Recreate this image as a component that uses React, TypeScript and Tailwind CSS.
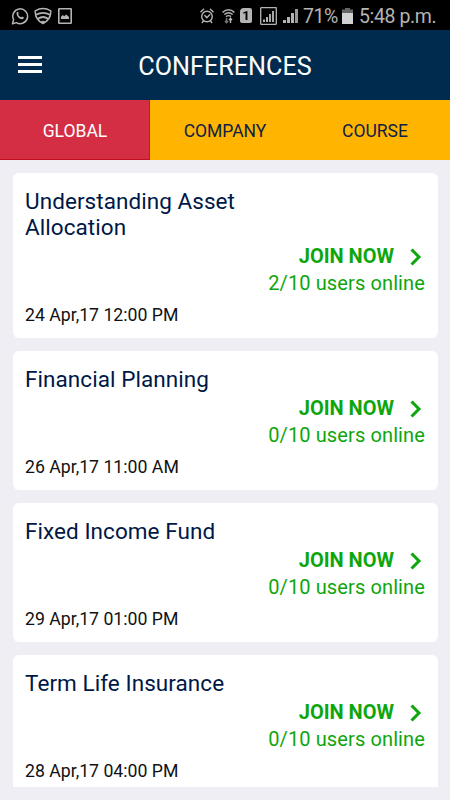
import { clsx } from 'clsx'

const TABS = ['GLOBAL', 'COMPANY', 'COURSE']

const CONFERENCES = [
  { title: 'Understanding Asset Allocation', online: 2, date: '24 Apr,17 12:00 PM' },
  { title: 'Financial Planning', online: 0, date: '26 Apr,17 11:00 AM' },
  { title: 'Fixed Income Fund', online: 0, date: '29 Apr,17 01:00 PM' },
  { title: 'Term Life Insurance', online: 0, date: '28 Apr,17 04:00 PM' },
]

function WhatsAppIcon() {
  return (
    <svg width="18" height="18" viewBox="0 0 18 18" fill="none" stroke="#b4b4b4">
      <path d="M1.5 16.7 2.6 12.6A7.4 7.4 0 1 1 5.4 15.6Z" strokeWidth="1.5" strokeLinejoin="round" />
      <path
        d="M5.8 5.2c.5-.7 1.2-.6 1.4 0l.5 1.2c.1.4-.5.8-.5 1.1.6 1.3 1.7 2.2 2.9 2.7.4 0 .8-.9 1.2-.8l1.4.8c.3.3 0 1.4-.9 1.8-3 1.1-7.3-3.5-6-6.8Z"
        fill="#b4b4b4"
        stroke="none"
      />
    </svg>
  )
}

function ShieldIcon() {
  return (
    <svg width="18" height="18" viewBox="0 0 18 18" fill="none" stroke="#b4b4b4">
      <path d="M1.2 3.8Q9-.6 16.8 3.8C17 10 14 14 9 16.5 4 14 1 10 1.2 3.8Z" strokeWidth="1.5" strokeLinejoin="round" />
      <path d="M2 7.8Q9 4 16 7.800M4 11.800Q9 8.200 14 11.800" strokeWidth="1.8" />
      <path d="M7 14.800Q9 13.300 11 14.800L9 16.500Z" fill="#b4b4b4" strokeWidth=".5" />
    </svg>
  )
}

function PictureIcon() {
  return (
    <svg width="14" height="16" viewBox="0 0 14 16" fill="none">
      <rect x=".8" y=".8" width="12.4" height="14.4" rx=".5" stroke="#b4b4b4" strokeWidth="1.6" />
      <path d="M3 11V8.800L4.800 7 6.300 8.200 8.200 6.500 11 9v2Z" fill="#b4b4b4" />
    </svg>
  )
}

function AlarmIcon() {
  return (
    <svg width="14" height="16" viewBox="0 0 14 16" fill="none" stroke="#b4b4b4" strokeWidth="1.4" strokeLinecap="round">
      <circle cx="7" cy="8.5" r="5.3" />
      <path d="M.9 3.7 3.6 1.2M13.1 3.7 10.4 1.2M4.8 7.5 6.8 9.7 9.7 6.7M3.5 12.8 2.3 14.5M10.5 12.8 11.7 14.5" />
    </svg>
  )
}

function WifiIcon() {
  return (
    <svg width="13" height="16" viewBox="0 0 13 16" fill="none" stroke="#b4b4b4" strokeWidth="1.4">
      <path d="M.6 4.4Q6.5-.8 12.4 4.4M2.3 6.5Q6.5 3 10.7 6.5M4 8.6Q6.5 6.6 9 8.6" />
      <path d="M4.5 10v4.5M3 13l1.5 1.7L6 13" stroke="#777" />
      <path d="M8.5 15v-4.5M7 12l1.5-1.7L10 12" />
    </svg>
  )
}

function SimIcon() {
  return (
    <span className="flex h-[15px] w-[12px] items-center justify-center rounded-[2px] rounded-tl-[4px] bg-[#b4b4b4] text-[13px] leading-none font-bold text-black">
      1
    </span>
  )
}

function SignalIcon({ boxed = false }: { boxed?: boolean }) {
  if (boxed) {
    return (
      <svg width="17" height="18" viewBox="0 0 17 18">
        <rect x=".7" y=".7" width="15.6" height="16.6" rx=".5" fill="none" stroke="#b4b4b4" strokeWidth="1.3" />
        <path d="M3 12.5h2V15H3ZM6 10h2v5H6Z" fill="#b4b4b4" />
        <path d="M9 7h2v8H9ZM12 4h2v11h-2Z" fill="#a6a6a6" />
      </svg>
    )
  }
  return (
    <svg width="16" height="15" viewBox="0 0 16 15">
      <path d="M0 12h3v3H0ZM4 9h3v6H4ZM8 5h3v10H8Z" fill="#b4b4b4" />
      <path d="M12 1h3v14h-3Z" fill="#999" />
    </svg>
  )
}

function BatteryIcon() {
  return (
    <svg width="11" height="16" viewBox="0 0 11 16">
      <path d="M3 0h5v1.5h3V5H0V1.5h3Z" fill="#666" />
      <path d="M0 5h11v11H0Z" fill="#d2d2d2" />
    </svg>
  )
}

function StatusBar() {
  return (
    <div className="flex h-[30px] items-center justify-between bg-black pt-px pr-[14px] pl-[11px] text-[#b4b4b4]">
      <div className="flex items-center">
        <WhatsAppIcon />
        <span className="ml-[5px] flex"><ShieldIcon /></span>
        <span className="ml-[6px] flex"><PictureIcon /></span>
      </div>
      <div className="flex items-center">
        <AlarmIcon />
        <span className="ml-[8px] flex"><WifiIcon /></span>
        <span className="ml-[5px] flex"><SimIcon /></span>
        <span className="ml-[8px] flex"><SignalIcon boxed /></span>
        <span className="ml-[6px] flex"><SignalIcon /></span>
        <span className="ml-[4px] w-[36px] pt-[2px] text-[19.5px] leading-none tracking-[-0.4px] whitespace-nowrap">71%</span>
        <span className="ml-[3px] flex"><BatteryIcon /></span>
        <span className="ml-[6px] w-[77px] pt-[2px] text-[19.5px] leading-none tracking-[-0.4px] whitespace-nowrap">5:48 p.m.</span>
      </div>
    </div>
  )
}

function AppBar() {
  return (
    <header className="grid h-[70px] grid-cols-[42px_1fr_42px] items-center bg-[#002b4e] px-[18px]">
      <button className="flex w-6 flex-col gap-[4px] pb-px" aria-label="Menu">
        <span className="h-[3px] w-full bg-white" />
        <span className="h-[3px] w-full bg-white" />
        <span className="h-[3px] w-full bg-white" />
      </button>
      <h1 className="pt-[4px] text-center text-[25.2px] leading-none text-white">CONFERENCES</h1>
    </header>
  )
}

function Tabs() {
  return (
    <nav className="grid h-[60px] grid-cols-3">
      {TABS.map((tab, i) => (
        <button
          key={tab}
          className={clsx(
            'pt-[3px] text-[17.5px]',
            i === 0
              ? 'border-b border-b-[#c40d20] bg-[#d42e44] text-white shadow-[inset_-1px_0_0_#b5222c]'
              : 'bg-[#ffb400] text-[#0f2148]',
          )}
        >
          {tab}
        </button>
      ))}
    </nav>
  )
}

function ConferenceCard({ title, online, date }: (typeof CONFERENCES)[number]) {
  return (
    <article className="shrink-0 rounded-[6px] bg-white px-[12.5px] pt-[15px] pb-[12px]">
      <h2 className="w-[240px] text-[22.5px] leading-[26px] tracking-[0.06px] text-[#001847]">{title}</h2>
      <div className="mt-[3px] flex flex-col items-end text-[#0da60d]">
        <div className="flex items-center pr-[3px]">
          <span className="text-[20px] leading-[27px] font-bold">JOIN NOW</span>
          <svg className="mt-[2px] ml-[16px]" width="12" height="18" viewBox="0 0 12 18" fill="none" stroke="currentColor" strokeWidth="3">
            <path d="M1.5 1.5 9 9 1.5 16.5" />
          </svg>
        </div>
        <span className="text-[20px] leading-[27px] tracking-[0.12px]">{online}/10 users online</span>
      </div>
      <p className="mt-[8px] text-[17.7px] leading-[21px] text-[#111]">{date}</p>
    </article>
  )
}

export default function App() {
  return (
    <div className="flex h-[800px] w-[450px] flex-col overflow-hidden bg-[#efeef4] font-['Roboto',sans-serif]">
      <StatusBar />
      <AppBar />
      <Tabs />
      <main className="mx-[12.5px] mt-[12.5px] mb-[13px] flex min-h-0 flex-1 flex-col gap-[13px] overflow-hidden">
        {CONFERENCES.map((conference) => (
          <ConferenceCard key={conference.title} {...conference} />
        ))}
      </main>
    </div>
  )
}
